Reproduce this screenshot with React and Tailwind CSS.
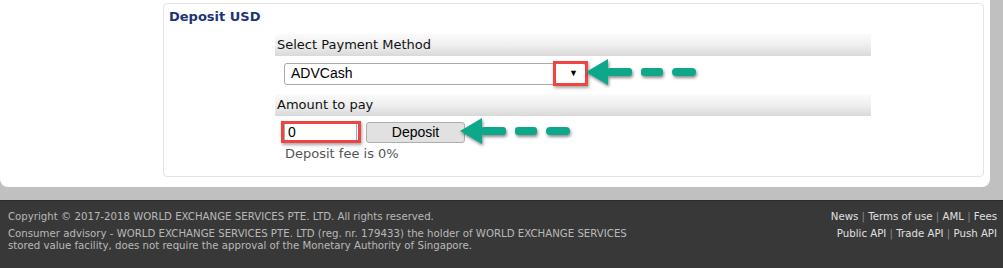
import React from 'react';

const verdana = { fontFamily: '"DejaVu Sans", Verdana, sans-serif' };
const arial = { fontFamily: '"Liberation Sans", Arial, sans-serif' };

const Arrow = ({ className }) => (
  <svg className={className} width="112" height="30" viewBox="0 0 112 30" style={{ filter: 'drop-shadow(1px 2px 1.5px rgba(0,0,0,0.45))' }}>
    <polygon points="0,14 22,1 22,27" fill="#0da88a" />
    <rect x="21" y="10" width="25" height="8" rx="3" fill="#0da88a" />
    <rect x="55" y="10" width="22" height="8" rx="3" fill="#0da88a" />
    <rect x="86" y="10" width="24" height="8" rx="4" fill="#0da88a" />
  </svg>
);

const Bar = ({ children }) => (
  <div className="h-[22px] pl-[2px] pt-[1px] text-[13px] text-[#111] bg-gradient-to-b from-[#fbfbfb] via-[#efefef] to-[#d9d9d9]" style={verdana}>
    {children}
  </div>
);

export default function App() {
  return (
    <div className="w-full h-[268px] bg-[#c0c0c0] flex flex-col overflow-hidden">
      <div className="flex h-[187px]">
        <div className="w-[990px] bg-white rounded-b-[8px] pt-[3px] pl-[163px]">
          <div className="relative w-[821px] h-[174px] border border-[#e4e4e4] rounded-[4px]">
            <div className="pl-[5px] pt-[3px] text-[13px] font-bold text-[#1b3478]" style={verdana}>Deposit USD</div>
            <div className="ml-[111px] mt-[7px] w-[596px]">
              <Bar>Select Payment Method</Bar>
              <div className="h-[38px] pt-[7px] pl-[9px]">
                <div className="w-[302px] h-[22px] border border-[#a9a9a9] rounded-[3px] flex items-center justify-between pl-[6px] pr-[7px] text-[14px] text-black" style={arial}>
                  <span>ADVCash</span>
                  <span className="text-[9px]">▼</span>
                </div>
              </div>
              <Bar>Amount to pay</Bar>
              <div className="pt-[6px] pl-[9px] flex gap-[9px]">
                <div className="w-[73px] h-[21px] border border-[#a9a9a9] pl-[3px] text-[14px] text-black leading-[19px]" style={arial}>0</div>
                <div className="w-[99px] h-[21px] border border-[#adadad] rounded-[3px] bg-[#e1e1e1] flex items-center justify-center text-[14px] text-black" style={arial}>Deposit</div>
              </div>
              <div className="pl-[10px] pt-[1px] text-[13px] text-[#555]" style={verdana}>Deposit fee is 0%</div>
            </div>
            {/* annotations */}
            <div className="absolute left-[389px] top-[57px] w-[35px] h-[25px] border-[3px] border-[#ee4444] shadow-[1px_2px_3px_rgba(0,0,0,0.35)]" />
            <div className="absolute left-[117px] top-[117px] w-[80px] h-[22px] border-[3px] border-[#ee4444] shadow-[1px_2px_3px_rgba(0,0,0,0.35)]" />
            <Arrow className="absolute left-[422px] top-[54px]" />
            <Arrow className="absolute left-[296px] top-[113px]" />
          </div>
        </div>
      </div>
      <div className="h-[13px]" />
      <div className="flex-1 bg-[#383838] border-t border-[#2c2c2c] flex justify-between pl-[8px] pr-[6px] pt-[10px] text-[10.2px] leading-[12px]" style={verdana}>
        <div className="text-[#b8b8b8]">
          <div>Copyright © 2017-2018 WORLD EXCHANGE SERVICES PTE. LTD. All rights reserved.</div>
          <div className="mt-[5px]">Consumer advisory - WORLD EXCHANGE SERVICES PTE. LTD (reg. nr. 179433) the holder of WORLD EXCHANGE SERVICES</div>
          <div>stored value facility, does not require the approval of the Monetary Authority of Singapore.</div>
        </div>
        <div className="text-right text-[#e0e0e0]">
          <div>News <span className="text-[#888]">|</span> Terms of use <span className="text-[#888]">|</span> AML <span className="text-[#888]">|</span> Fees</div>
          <div className="mt-[5px]">Public API <span className="text-[#888]">|</span> Trade API <span className="text-[#888]">|</span> Push API</div>
        </div>
      </div>
    </div>
  );
}
